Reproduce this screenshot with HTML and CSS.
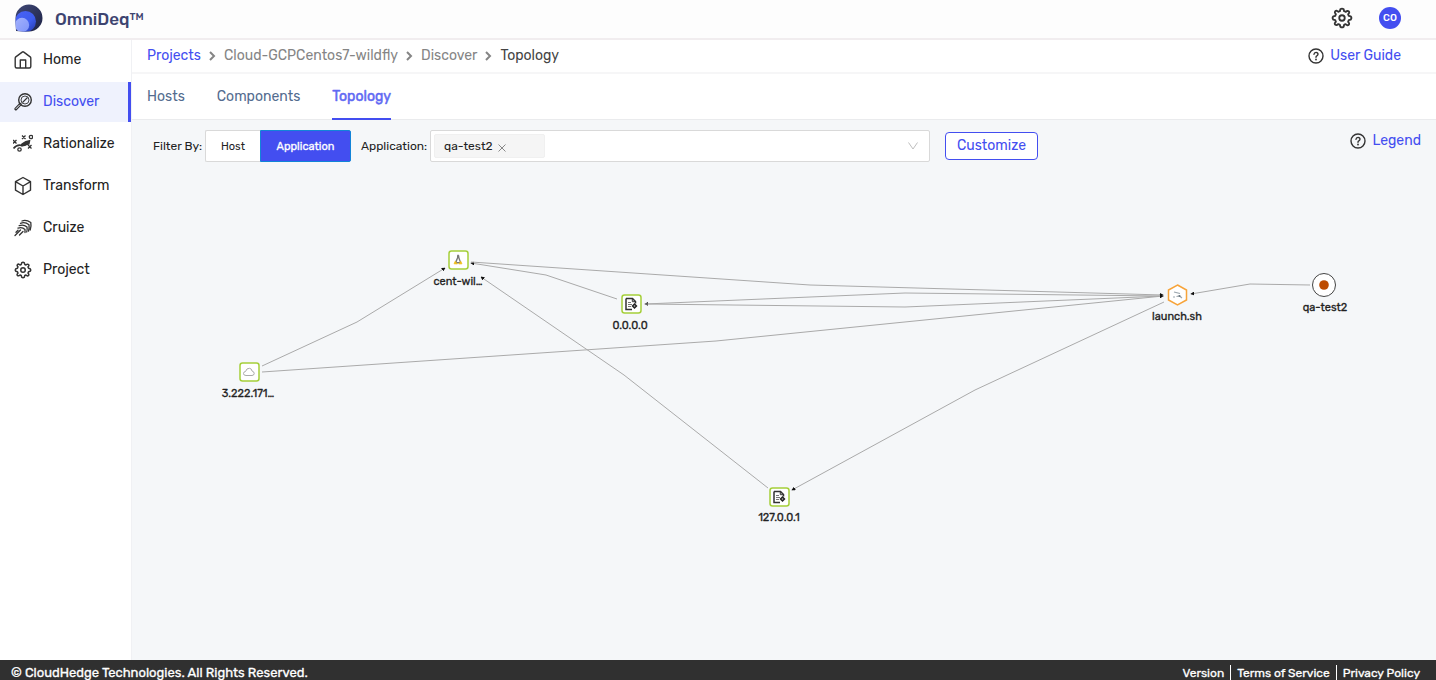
FILE: index.html
```html
<!DOCTYPE html>
<html lang="en">
<head>
<meta charset="utf-8">
<meta name="viewport" content="width=device-width, initial-scale=1">
<title>OmniDeq – Topology</title>
<link rel="stylesheet" href="styles.css">
</head>
<body>
<svg class="defs" aria-hidden="true">
  <defs>
    <linearGradient id="logo-dark" x1="0" y1="0" x2="1" y2="1"><stop offset="0" stop-color="#414a78"/><stop offset="1" stop-color="#1c2144"/></linearGradient>
    <linearGradient id="logo-mid" x1="0" y1="0" x2="1" y2="1"><stop offset="0" stop-color="#4a63f5"/><stop offset=".6" stop-color="#3d5cee"/><stop offset="1" stop-color="#2338a8"/></linearGradient>
    <linearGradient id="logo-light" x1="0" y1="0" x2="1" y2="1"><stop offset="0" stop-color="#a3b2fc"/><stop offset="1" stop-color="#7f94fa"/></linearGradient>
    <symbol id="gear" viewBox="0 0 24 24">
      <path d="M10.200 2.500 Q12 1 13.800 2.500 L14.300 4.600 Q15.200 4.900 16 5.300 L17.900 4.200 Q20 4.200 19.900 6.200 L18.700 8 Q19.100 8.900 19.400 9.700 L21.500 10.200 Q23 12 21.500 13.800 L19.400 14.300 Q19.100 15.200 18.700 16 L19.800 17.900 Q19.800 20 17.800 19.900 L16 18.700 Q15.100 19.100 14.300 19.400 L13.800 21.500 Q12 23 10.200 21.500 L9.700 19.400 Q8.800 19.100 8 18.700 L6.100 19.800 Q4 19.800 4.100 17.800 L5.300 16 Q4.900 15.100 4.600 14.300 L2.500 13.800 Q1 12 2.500 10.200 L4.600 9.700 Q4.900 8.800 5.300 8 L4.200 6.100 Q4.200 4 6.200 4.100 L8 5.300 Q8.900 4.900 9.700 4.600 Z" fill="none" stroke="currentColor" stroke-width="2" stroke-linejoin="round"/>
      <circle cx="12" cy="12" r="3" fill="none" stroke="currentColor" stroke-width="2"/>
    </symbol>
    <symbol id="help" viewBox="0 0 16 16">
      <circle cx="8" cy="8" r="7" fill="none" stroke="currentColor" stroke-width="1.400"/>
      <path d="M6 6.300 Q6.200 4.400 8 4.400 Q10 4.500 10 6.200 Q9.900 7.200 8.800 7.800 Q8 8.200 8 9.200" fill="none" stroke="currentColor" stroke-width="1.400" stroke-linecap="round"/>
      <circle cx="8" cy="11.500" r=".9" fill="currentColor"/>
    </symbol>
    <symbol id="chevron" viewBox="0 0 7 10">
      <path d="M1 1 L5 5 L1 9" fill="none" stroke="currentColor" stroke-width="2"/>
    </symbol>
    <symbol id="file-host" viewBox="0 0 14 14">
      <path d="M2 1.500 H8.500 L11.500 4.500 V6.500 M2 1.500 V12.500 H8" fill="none" stroke="#333" stroke-width="1.500"/>
      <path d="M8.300 1.500 V4.700 H11.500" fill="none" stroke="#333"/>
      <path d="M4 5.500 H7 M4 7.500 H8 M4 9.500 H7" stroke="#777"/>
      <path d="M10.500 6 L13.500 9 L10.500 12 L7.500 9 Z" fill="#222"/>
      <circle cx="10.500" cy="9" r=".8" fill="#bbb"/>
    </symbol>
    <marker id="arrow" viewBox="0 0 6 6" refX="5" refY="3" markerWidth="4" markerHeight="4" markerUnits="userSpaceOnUse" orient="auto"><path d="M0 0 L6 3 L0 6 Z" fill="#111"/></marker>
  </defs>
</svg>

<header class="topbar">
  <a class="brand" href="#">
    <svg class="brand-logo" viewBox="0 0 28 28" aria-hidden="true">
      <clipPath id="logo-clip"><path d="M14 0.500 A13.500 13.500 0 0 1 14 27.500 Q8 27.500 1 27 Q.5 20 .5 14 A13.500 13.500 0 0 1 14 .5 Z"/></clipPath>
      <g clip-path="url(#logo-clip)">
        <rect width="28" height="28" fill="url(#logo-dark)"/>
        <circle cx="10.500" cy="17.500" r="10.500" fill="url(#logo-mid)"/>
        <circle cx="7" cy="21" r="7.200" fill="url(#logo-light)"/>
      </g>
    </svg>
    <span>OmniDeq<span class="trademark">TM</span></span>
  </a>
  <div class="topbar-actions">
    <button class="icon-button" type="button" aria-label="Settings"><svg class="settings-icon" aria-hidden="true"><use href="#gear"/></svg></button>
    <button class="avatar" type="button">CO</button>
  </div>
</header>

<div class="shell">
  <nav class="sidebar" aria-label="Main">
    <a class="nav-item" href="#">
      <svg class="nav-icon" viewBox="0 0 20 20" aria-hidden="true"><path d="M2.200 8.200 Q2.200 7.400 2.800 6.900 L9.200 2.100 Q10 1.500 10.800 2.100 L17.200 6.900 Q17.800 7.400 17.800 8.200 V16.500 Q17.800 18 16.300 18 H3.700 Q2.200 18 2.200 16.500 Z M7.300 18 V10 H12.700 V18" fill="none" stroke="currentColor" stroke-width="1.400" stroke-linejoin="round"/></svg>
      <span>Home</span>
    </a>
    <a class="nav-item active" href="#" aria-current="page">
      <svg class="nav-icon" viewBox="0 0 20 20" aria-hidden="true"><g fill="none" stroke="currentColor"><circle cx="12" cy="8" r="6.300" stroke-width="1.400"/><circle cx="12" cy="8" r="4" stroke-width=".9"/><path d="M9.500 10.500 L14.500 5.500" stroke-width="1.100"/><path d="M7.300 12.300 L2.800 17" stroke-width="3" stroke-linecap="round"/></g><path d="M6.800 12.800 L2.800 16.900" stroke="#eff2fd"/></svg>
      <span>Discover</span>
    </a>
    <a class="nav-item" href="#">
      <svg class="nav-icon" viewBox="0 0 20 20" aria-hidden="true"><g fill="none" stroke="currentColor" stroke-width="1.300"><path d="M0 6 L3.500 9.500 M3.500 6 L0 9.500 M9 1.500 L12.500 5 M12.500 1.500 L9 5 M15 11 L18.500 14.500 M18.500 11 L15 14.500"/><circle cx="18" cy="3" r="1.700"/><circle cx="6.500" cy="15.500" r="1.700"/><path d="M.5 14.500 Q4 10 9 11.500 Q12 12 14.500 8.500" stroke-width="1.600"/></g><path d="M17.500 5.800 L16.500 10.500 L9 12.500 Q6.500 12 8.500 9.500 Q12 6.500 17.500 5.800Z" fill="currentColor"/></svg>
      <span>Rationalize</span>
    </a>
    <a class="nav-item" href="#">
      <svg class="nav-icon" viewBox="0 0 20 20" aria-hidden="true"><path d="M10 1.500 L17.500 5.600 V14.200 L10 18.500 L2.500 14.200 V5.600 Z M2.500 5.600 L10 10 L17.500 5.600 M10 10 V18.500" fill="none" stroke="currentColor" stroke-width="1.400" stroke-linejoin="round"/></svg>
      <span>Transform</span>
    </a>
    <a class="nav-item" href="#">
      <svg class="nav-icon" viewBox="0 0 20 20" aria-hidden="true"><path d="M9 3 Q13 1.200 17.800 4.500 Q18.500 8 17.200 12 M7.500 5.300 Q12 3.500 16 6.800 Q16.500 10 15.500 13.200 M6.200 7.700 Q10.500 6 14 9 Q14.500 11.500 13.700 14 M5 10.200 Q9 8.500 12 11.500 L12 14.500 M7.500 12 L2 17.500 M10 13.500 L6.500 17 M5 12.200 L3 14.200" fill="none" stroke="currentColor" stroke-width="1.300" stroke-linecap="round" stroke-linejoin="round"/></svg>
      <span>Cruize</span>
    </a>
    <a class="nav-item" href="#">
      <svg class="nav-icon" viewBox="0 0 20 20" aria-hidden="true"><use href="#gear" x="1" y="1" width="18" height="18"/></svg>
      <span>Project</span>
    </a>
  </nav>

  <main class="content">
    <div class="crumb-bar">
      <nav class="crumbs" aria-label="Breadcrumb">
        <a class="crumb-root" href="#">Projects</a>
        <svg class="crumb-sep" aria-hidden="true"><use href="#chevron"/></svg>
        <a href="#">Cloud-GCPCentos7-wildfly</a>
        <svg class="crumb-sep" aria-hidden="true"><use href="#chevron"/></svg>
        <a href="#">Discover</a>
        <svg class="crumb-sep" aria-hidden="true"><use href="#chevron"/></svg>
        <span class="crumb-current">Topology</span>
      </nav>
      <a class="help-link" href="#"><svg class="help-icon" aria-hidden="true"><use href="#help"/></svg>User Guide</a>
    </div>

    <nav class="tabs" aria-label="Discover views">
      <a class="tab" href="#">Hosts</a>
      <a class="tab" href="#">Components</a>
      <a class="tab selected" href="#" aria-current="page">Topology</a>
    </nav>

    <section class="workspace">
      <div class="toolbar">
        <span class="toolbar-label filter-label" id="filter-label">Filter By:</span>
        <div class="segmented" role="group" aria-labelledby="filter-label">
          <button class="segment" type="button" aria-pressed="false">Host</button>
          <button class="segment on" type="button" aria-pressed="true">Application</button>
        </div>
        <label class="toolbar-label app-label" for="application">Application:</label>
        <div class="picker">
          <span class="tag">qa-test2
            <button class="tag-remove" type="button" aria-label="Remove qa-test2"><svg viewBox="0 0 8 8" aria-hidden="true"><path d="M.5 .5 L7.500 7.500 M7.500 .5 L.5 7.500" stroke="currentColor"/></svg></button>
          </span>
          <input class="picker-input" id="application" type="text" role="combobox" aria-expanded="false">
          <svg class="picker-arrow" viewBox="0 0 10 8" aria-hidden="true"><path d="M.5 .5 L5 7 L9.500 .5" fill="none" stroke="currentColor"/></svg>
        </div>
        <button class="customize" type="button">Customize</button>
        <a class="help-link legend" href="#"><svg class="help-icon" aria-hidden="true"><use href="#help"/></svg>Legend</a>
      </div>

      <svg class="graph" viewBox="134 172 1302 488" preserveAspectRatio="xMinYMin meet" role="img" aria-label="Application topology">
        <g class="edges">
          <path d="M262 366 L357 322 L445 268"/>
          <path d="M262 372 L716 341 L1163 296"/>
          <path d="M617 299 L546 275 L471 263"/>
          <path d="M471 262 L810 285 L1163 295"/>
          <path d="M1163 296 L905 293 L645 304"/>
          <path d="M645 304 L905 307 L1163 296"/>
          <path d="M768 488 L624 375 L481 277"/>
          <path d="M1164 302 L975 390 L792 490"/>
          <path d="M1310 285 L1250 284 L1191 294"/>
        </g>
        <g class="node">
          <rect x="449" y="251" width="19" height="18" rx="2.500"/>
          <path d="M458 254.500 Q456.500 255 457 257.500 L455 262 Q458 265 461 262 L459.500 257.500 Q459.800 255 458 254.500Z" fill="#777"/>
          <path d="M458.200 258 L456.700 262 H459.700Z" fill="#fff"/>
          <path d="M454 263.800 L455.200 261.300 L457.400 264Z M462 263.800 L460.800 261.300 L458.800 264Z" fill="#efbd16" stroke="#efbd16" stroke-width=".7"/>
          <text x="458" y="285">cent-wil…</text>
        </g>
        <g class="node">
          <rect x="622" y="295" width="19" height="18" rx="2.500"/>
          <use href="#file-host" x="624" y="297" width="14" height="14"/>
          <text x="630" y="329">0.0.0.0</text>
        </g>
        <g class="node">
          <rect x="240" y="363" width="19" height="18" rx="2.500"/>
          <path d="M246 375.500 Q243.500 375.500 243.500 373.500 Q243.500 371.700 245.500 371.500 Q246.500 368 249.500 368.300 Q251.800 368.600 252 371 Q254.200 371.500 254.200 373.500 Q254 375.500 252 375.500Z" fill="none" stroke="#aaa"/>
          <text x="248" y="397">3.222.171…</text>
        </g>
        <g class="node">
          <rect x="770" y="488" width="19" height="18" rx="2.500"/>
          <use href="#file-host" x="772" y="490" width="14" height="14"/>
          <text x="779" y="521">127.0.0.1</text>
        </g>
        <g class="node">
          <path class="hexagon" d="M1177.500 285 L1186.500 290 V300 L1177.500 305 L1168.500 300 V290 Z"/>
          <path d="M1174 292 L1180 293.500 M1173 297 H1175 M1176.500 296.500 L1179.500 296 L1182 298" fill="none" stroke="#9aa5ad" stroke-width="1.200"/>
          <circle cx="1179.500" cy="296" r="1" fill="#69767f"/>
          <text x="1177" y="320">launch.sh</text>
        </g>
        <g class="node">
          <circle class="app-ring" cx="1324" cy="285" r="11.500"/>
          <circle cx="1324" cy="285" r="4.800" fill="#bd4b00"/>
          <text x="1325" y="311">qa-test2</text>
        </g>
      </svg>
    </section>
  </main>
</div>

<footer class="footer">
  <span>© CloudHedge Technologies. All Rights Reserved.</span>
  <nav class="footer-links" aria-label="Legal">
    <a href="#">Version</a>
    <a href="#">Terms of Service</a>
    <a href="#">Privacy Policy</a>
  </nav>
</footer>
</body>
</html>
```

FILE: styles.css
```css
* {
  box-sizing: border-box;
}

body {
  display: flex;
  flex-direction: column;
  min-height: 100vh;
  margin: 0;
  background: #fff;
  color: #222;
  font: 14px/20px Rubik, Roboto, sans-serif;
}

a {
  color: inherit;
  text-decoration: none;
}

button,
input {
  margin: 0;
  padding: 0;
  border: 0;
  background: none;
  color: inherit;
  font: inherit;
}

button {
  cursor: pointer;
}

svg {
  display: block;
  flex: none;
}

.defs {
  position: absolute;
  width: 0;
  height: 0;
}

.topbar {
  display: flex;
  align-items: center;
  justify-content: space-between;
  height: 40px;
  padding: 0 35px 2px 15px;
  border-bottom: 2px solid #f1edef;
  background: #fdfdfd;
}

.brand {
  display: flex;
  align-items: center;
  gap: 12px;
  color: #3d4470;
  font-size: 17px;
  font-weight: 500;
}

.brand > span {
  padding-top: 2px;
}

.brand-logo {
  width: 28px;
  height: 28px;
}

.trademark {
  font-size: 10px;
  line-height: 10px;
  vertical-align: 5px;
}

.topbar-actions {
  display: flex;
  align-items: center;
  gap: 26px;
}

.icon-button {
  color: #333;
}

.settings-icon {
  width: 22px;
  height: 22px;
}

.avatar {
  width: 22px;
  height: 22px;
  border-radius: 50%;
  background: #434ef0;
  color: #fff;
  font-size: 10px;
  font-weight: 500;
}

.shell {
  display: flex;
  flex: 1;
}

.sidebar {
  display: flex;
  flex: none;
  flex-direction: column;
  gap: 2px;
  width: 132px;
  border-right: 1px solid #f0f1f4;
}

.nav-item {
  display: flex;
  align-items: center;
  gap: 10px;
  height: 40px;
  padding-left: 13px;
  border-right: 3px solid transparent;
}

.nav-item.active {
  border-color: #434ef0;
  background: #eff2fd;
}

.nav-item.active span {
  color: #434ef0;
}

.nav-icon {
  width: 20px;
  height: 20px;
  color: #333;
}

.content {
  display: flex;
  flex: 1;
  flex-direction: column;
  min-width: 0;
}

.crumb-bar {
  display: flex;
  align-items: center;
  justify-content: space-between;
  height: 34px;
  padding: 0 35px 0 15px;
  border-bottom: 2px solid #f6f6f7;
}

.crumbs {
  display: flex;
  align-items: center;
  gap: 8px;
  color: #858585;
}

.crumb-root,
.help-link {
  color: #434ef0;
}

.crumb-current {
  color: #444;
}

.crumb-sep {
  width: 7px;
  height: 10px;
}

.help-link {
  display: flex;
  align-items: center;
  gap: 6px;
}

.help-icon {
  width: 16px;
  height: 16px;
  color: #333;
}

.tabs {
  display: flex;
  gap: 32px;
  height: 46px;
  padding-left: 15px;
  border-bottom: 1px solid #eaebed;
  color: #536c8f;
}

.tab {
  height: 46px;
  padding-top: 13px;
}

.tab.selected {
  border-bottom: 2px solid #434ef0;
  color: #5f69f3;
  -webkit-text-stroke: 0.5px currentColor;
}

.workspace {
  display: flex;
  flex: 1;
  flex-direction: column;
  padding-left: 2px;
  background: #f5f7f9;
}

.toolbar {
  display: flex;
  align-items: center;
  min-height: 52px;
  padding: 0 15px 0 19px;
}

.toolbar-label {
  flex: none;
  font-size: 12px;
}

.filter-label {
  width: 49px;
  white-space: nowrap;
}

.segmented {
  display: flex;
  flex: none;
  width: 146px;
  height: 32px;
  margin-left: 3px;
  font-size: 11px;
}

.segment {
  flex: none;
  width: 55px;
  padding-top: 1px;
  border: 1px solid #d9d9d9;
  border-right: 0;
  border-radius: 2px 0 0 2px;
  background: #fff;
}

.segment.on {
  width: 91px;
  border: 1px solid #1284d8;
  border-radius: 0 2px 2px 0;
  background: #434ef0;
  color: #fff;
  -webkit-text-stroke: 0.3px currentColor;
}

.app-label {
  width: 69px;
  margin-left: 10px;
}

.picker {
  display: flex;
  flex: 0 1 500px;
  align-items: center;
  min-width: 0;
  height: 32px;
  padding: 0 11px 0 3px;
  border: 1px solid #d9d9d9;
  border-radius: 2px;
  background: #fff;
}

.tag {
  display: flex;
  flex: none;
  align-items: center;
  gap: 5px;
  width: 111px;
  height: 24px;
  padding-left: 9px;
  border: 1px solid #f0f0f0;
  border-radius: 2px;
  background: #f5f5f5;
  font-size: 12px;
}

.tag-remove {
  padding-top: 3px;
  color: #888;
}

.tag-remove svg {
  width: 8px;
  height: 8px;
}

.picker-input {
  flex: 1;
  min-width: 0;
  outline: 0;
}

.picker-arrow {
  width: 10px;
  height: 8px;
  color: #bfbfbf;
}

.customize {
  flex: none;
  width: 93px;
  height: 28px;
  margin-left: 15px;
  border: 1px solid #434ef0;
  border-radius: 4px;
  background: #fff;
  color: #434ef0;
}

.legend {
  margin-left: auto;
  padding-bottom: 10px;
}

.graph {
  width: 100%;
  height: auto;
}

.edges path {
  fill: none;
  stroke: #aaa;
  marker-end: url(#arrow);
}

.node rect {
  fill: #fff;
  stroke: #a5cf3a;
  stroke-width: 1.5px;
}

.node text {
  fill: #222;
  stroke: #222;
  stroke-width: 0.3px;
  font-size: 11px;
  text-anchor: middle;
}

.hexagon {
  fill: #fff;
  stroke: #f7a43a;
  stroke-width: 1.5px;
}

.app-ring {
  fill: #fff;
  stroke: #444;
}

.footer {
  display: flex;
  align-items: center;
  justify-content: space-between;
  height: 20px;
  padding: 5px 10px 0 11px;
  overflow: hidden;
  background: #303030;
  color: #fff;
  font-size: 13px;
  line-height: 16px;
  -webkit-text-stroke: 0.3px currentColor;
}

.footer-links {
  display: flex;
  font-size: 12px;
}

.footer-links a {
  padding: 0 6px;
}

.footer-links a + a {
  border-left: 1px solid #fff;
}
```
